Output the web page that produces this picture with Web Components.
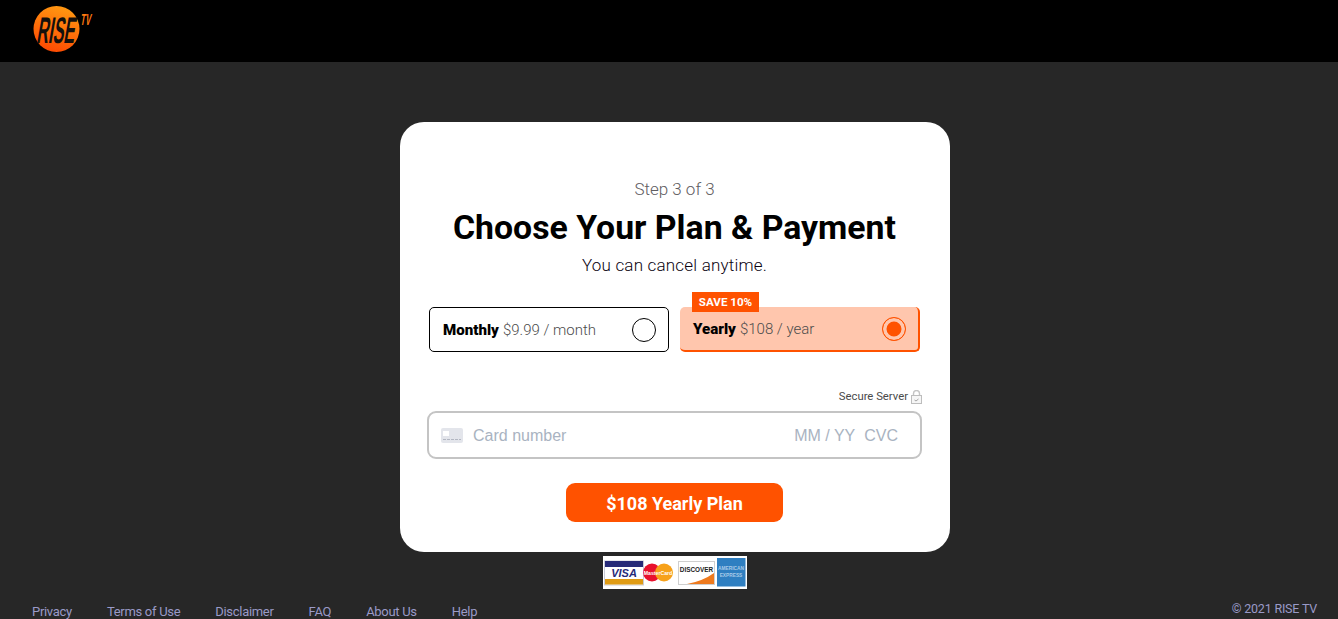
<!DOCTYPE html>
<html lang="en">
<head>
<meta charset="utf-8">
<title>RISE TV</title>
<style>
  html, body { margin: 0; height: 619px; overflow: hidden; background: #272727; }
  body { font-family: Roboto, "Liberation Sans", sans-serif; display: flex; flex-direction: column; }
</style>
</head>
<body>
<rise-header></rise-header>
<rise-main>
  <plan-card>
    <plan-option slot="plans" name="Monthly" price="$9.99 / month"></plan-option>
    <plan-option slot="plans" name="Yearly" price="$108 / year" badge="SAVE 10%" selected></plan-option>
  </plan-card>
  <pay-logos></pay-logos>
</rise-main>
<rise-footer></rise-footer>

<script>
window.customElements.define(
  'rise-header',
  class extends HTMLElement {
    connectedCallback() {
      var shadowRoot = this.attachShadow({ mode: 'open' })
      shadowRoot.innerHTML = `<style>${this.css()}</style>
        <svg width="80" height="60" viewBox="0 0 80 60">
          <defs>
            <linearGradient id="ball" x1="0.7" y1="0" x2="0.4" y2="1">
              <stop offset="0" stop-color="#ff9a12"/>
              <stop offset="1" stop-color="#fd4a02"/>
            </linearGradient>
          </defs>
          <circle cx="23.500" cy="29" r="23" fill="url(#ball)"/>
          <text transform="translate(3 43) skewX(-10) scale(.44 1)" font-family="'Liberation Sans',sans-serif"
            font-size="37" font-weight="700" fill="#14100c">RISE</text>
          <text transform="translate(47 25) skewX(-10) scale(.5 1)" font-family="'Liberation Sans',sans-serif"
            font-size="16" font-weight="700" fill="#ff7a10">TV</text>
        </svg>`
    }

    css() {
      return `
        :host {
          display: flex;
          flex: none;
          height: 62px;
          background: #000;
          padding-left: 33px;
          align-items: flex-start;
        }
        svg { display: block; }
      `
    }
  }
)

window.customElements.define(
  'rise-main',
  class extends HTMLElement {
    connectedCallback() {
      var shadowRoot = this.attachShadow({ mode: 'open' })
      shadowRoot.innerHTML = `<style>
        :host {
          display: flex;
          flex-direction: column;
          align-items: center;
          flex: none;
          padding: 60px 0 0 12px;
        }
      </style><slot></slot>`
    }
  }
)

window.customElements.define(
  'plan-card',
  class extends HTMLElement {
    connectedCallback() {
      var shadowRoot = this.attachShadow({ mode: 'open' })
      shadowRoot.innerHTML = `<style>${this.css()}</style>
        <div class="step">Step 3 of 3</div>
        <h1>Choose Your Plan &amp; Payment</h1>
        <div class="sub">You can cancel anytime.</div>
        <div class="plans"><slot name="plans"></slot></div>
        <div class="secure">Secure Server
          <svg width="11" height="14" viewBox="0 0 11 14">
            <path d="M2.500 6V3.500a3 3 0 0 1 6 0V6" fill="none" stroke="#c4c4c4" stroke-width="1.400"/>
            <rect x=".5" y="5.500" width="10" height="8" fill="#f6f6f6" stroke="#bdbdbd"/>
            <path d="M3.500 10l1.500 1 2.500-2" fill="none" stroke="#8d8d8d" stroke-width=".8"/>
          </svg>
        </div>
        <div class="field">
          <svg width="22" height="15" viewBox="0 0 22 15">
            <rect width="22" height="15" rx="2" fill="#e3e5eb"/>
            <rect x="2" y="3" width="6" height="5" fill="#fff"/>
            <path d="M2 11.500h18" stroke="#b3b7c2" stroke-width="1.200" stroke-dasharray="3 1"/>
          </svg>
          <span class="num">Card number</span>
          <span class="exp">MM / YY</span>
          <span class="cvc">CVC</span>
        </div>
        <button>$108 Yearly Plan</button>`
    }

    css() {
      return `
        :host {
          display: flex;
          flex-direction: column;
          align-items: center;
          box-sizing: border-box;
          width: 550px;
          height: 430px;
          background: #fff;
          border-radius: 24px;
          padding: 58px 28px 0 27px;
          color: #000;
        }
        .step {
          font-size: 17px;
          line-height: 19px;
          font-weight: 300;
          color: #5f5d62;
        }
        h1 {
          margin: 9px 0 0;
          font-size: 33.800px;
          line-height: 40px;
          font-weight: 700;
        }
        .sub {
          margin-top: 8px;
          font-size: 17px;
          line-height: 19px;
          font-weight: 300;
          letter-spacing: .2px;
          color: #0c0412;
        }
        .plans {
          display: flex;
          gap: 11px;
          margin-top: 32px;
          padding-left: 2px;
          align-self: flex-start;
        }
        .secure {
          align-self: flex-end;
          display: flex;
          align-items: flex-end;
          gap: 3px;
          margin-top: 37px;
          height: 15px;
          font-size: 11.300px;
          line-height: 14px;
          color: #4a4a4a;
        }
        .field {
          box-sizing: border-box;
          align-self: stretch;
          display: flex;
          align-items: center;
          height: 48px;
          margin-top: 7px;
          padding: 0 22px 0 12px;
          border: 2px solid #c4c4c4;
          border-radius: 9px;
          font-family: "Liberation Sans", Arial, sans-serif;
          font-size: 16px;
          color: #a9b3c1;
        }
        .field span { padding-top: 1px; }
        .num { margin-left: 10px; flex: 1; }
        .cvc { margin-left: 9px; }
        button {
          margin-top: 24px;
          width: 217px;
          height: 39px;
          padding: 2px 0 0;
          border: 0;
          border-radius: 9px;
          background: #ff5200;
          color: #fff;
          font: 700 18px Roboto, sans-serif;
        }
      `
    }
  }
)

window.customElements.define(
  'plan-option',
  class extends HTMLElement {
    connectedCallback() {
      var shadowRoot = this.attachShadow({ mode: 'open' })
      var badge = this.getAttribute('badge')
      shadowRoot.innerHTML = `<style>${this.css()}</style>
        ${badge ? `<span class="badge">${badge}</span>` : ''}
        <b>${this.getAttribute('name')}</b>
        <span class="price">${this.getAttribute('price')}</span>
        <span class="radio"></span>`
    }

    css() {
      return `
        :host {
          position: relative;
          display: flex;
          align-items: center;
          box-sizing: border-box;
          width: 240px;
          height: 45px;
          padding: 0 12px 0 13px;
          background: #fff;
          border: 1px solid #000;
          border-radius: 5px;
          font-size: 15px;
          color: #000;
        }
        :host([selected]) {
          background: #ffc6ad;
          border: 0;
          border-right: 2px solid #ff5200;
          border-bottom: 2px solid #ff5200;
        }
        b { font-weight: 900; font-size: 15.100px; margin-right: 4px; }
        .price { color: #4c4c4c; font-weight: 300; flex: 1; }
        .radio {
          box-sizing: border-box;
          width: 24px;
          height: 24px;
          border: 1px solid #000;
          border-radius: 50%;
          background: #fff;
        }
        :host([selected]) .radio {
          border: 1.500px solid #ff5200;
          background: #ff5200;
          box-shadow: inset 0 0 0 3.500px #ffc6ad;
        }
        .badge {
          position: absolute;
          left: 12px;
          top: -15px;
          width: 67px;
          height: 20px;
          background: #ff5200;
          color: #fff;
          font-size: 11.600px;
          line-height: 20px;
          font-weight: 700;
          text-align: center;
        }
      `
    }
  }
)

window.customElements.define(
  'pay-logos',
  class extends HTMLElement {
    connectedCallback() {
      var shadowRoot = this.attachShadow({ mode: 'open' })
      shadowRoot.innerHTML = `<style>
        :host { display: block; margin-top: 4px; line-height: 0; }
      </style>
      <svg width="144" height="33" viewBox="0 0 144 33">
        <rect width="144" height="33" fill="#fff"/>
        <rect x="1.500" y="5" width="39" height="24" fill="#fff" stroke="#c9cbd6"/>
        <rect x="2" y="5" width="38" height="6" fill="#262a78"/>
        <rect x="2" y="23" width="38" height="5.500" fill="#df9b14"/>
        <text x="21" y="21" text-anchor="middle" font-family="Liberation Sans,sans-serif" font-size="11" font-weight="700" font-style="italic" fill="#262a78">VISA</text>
        <circle cx="49" cy="16.500" r="9" fill="#e8112d"/>
        <circle cx="61" cy="16.500" r="9" fill="#f7a11a"/>
        <text x="55" y="18.500" text-anchor="middle" font-family="Liberation Sans,sans-serif" font-size="5.200" font-weight="700" fill="#fff">MasterCard</text>
        <rect x="75.500" y="5.500" width="36" height="23" fill="#fff" stroke="#cfcfcf"/>
        <path d="M84 28 L111 28 L111 17 Q100 25 84 28z" fill="#ee7a1e"/>
        <text x="93.500" y="16" text-anchor="middle" font-family="Liberation Sans,sans-serif" font-size="6.400" font-weight="700" fill="#222">DISCOVER</text>
        <rect x="114" y="2" width="28.500" height="28.500" fill="#2f7fc1"/>
        <text x="128" y="14" text-anchor="middle" font-family="Liberation Sans,sans-serif" font-size="4.800" font-weight="700" fill="#a9cbe8">AMERICAN</text>
        <text x="128" y="21" text-anchor="middle" font-family="Liberation Sans,sans-serif" font-size="4.800" font-weight="700" fill="#a9cbe8">EXPRESS</text>
      </svg>`
    }
  }
)

window.customElements.define(
  'rise-footer',
  class extends HTMLElement {
    connectedCallback() {
      var shadowRoot = this.attachShadow({ mode: 'open' })
      shadowRoot.innerHTML = `<style>${this.css()}</style>
        <nav>
          <a>Privacy</a><a>Terms of Use</a><a>Disclaimer</a><a>FAQ</a><a>About Us</a><a>Help</a>
        </nav>
        <span>© 2021 RISE TV</span>`
    }

    css() {
      return `
        :host {
          display: flex;
          justify-content: space-between;
          align-items: flex-start;
          flex: none;
          margin-top: 11px;
          padding: 0 21px 0 32px;
          font-size: 13px;
          line-height: 17px;
          letter-spacing: -.3px;
          color: #9a9ac8;
        }
        nav { display: flex; gap: 35px; margin-top: 3px; }
        span { font-size: 12.500px; letter-spacing: -.2px; }
      `
    }
  }
)
</script>
</body>
</html>
